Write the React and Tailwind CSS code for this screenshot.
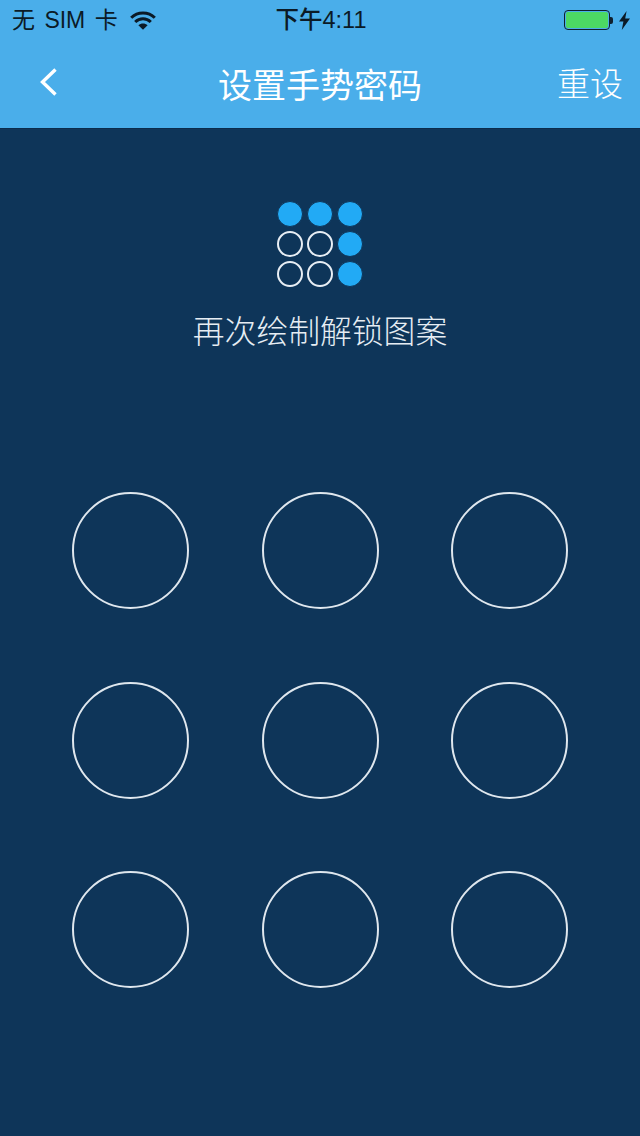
const sans = "font-['Liberation_Sans','Noto_Sans_CJK_SC',sans-serif]";

// 手势密码 preview: which of the 9 points are already drawn
const preview = [true, true, true, false, false, true, false, false, true];

function Wifi() {
  return (
    <svg width="26" height="19" viewBox="0 0 26 19" fill="none" stroke="#0b1a26" strokeWidth="3">
      <path d="M1.2 6.8C7.6 0.4 18.4 0.4 24.8 6.8" />
      <path d="M5.2 11C9.6 6.6 16.4 6.6 20.8 11" />
      <path d="M13 18.8L8.4 14.2C11 11.8 15 11.8 17.6 14.2Z" fill="#0b1a26" stroke="none" />
    </svg>
  );
}

function Battery() {
  return (
    <div className="flex items-center">
      <div className="w-[46px] h-[20px] rounded-[4px] border-[1.5px] border-[#10202e] p-[1px]">
        <div className="w-full h-full rounded-[2px] bg-[#4cd964]" />
      </div>
      <div className="w-[3px] h-[7px] rounded-r-[2px] bg-[#10202e]" />
    </div>
  );
}

function Bolt() {
  return (
    <svg width="11" height="19" viewBox="0 0 11 19" fill="#0b1a26">
      <path d="M7.6 0L0 10.6H4.4L2.8 19L11 7.4H6.2Z" />
    </svg>
  );
}

export default function App() {
  return (
    <div className={`w-[640px] h-[1136px] flex flex-col bg-[#0e3559] ${sans}`}>
      <header className="h-[129px] bg-[#4aaeea] border-b border-[#0b2c4c]">
        <div className="h-[40px] grid grid-cols-[1fr_auto_1fr] items-center text-[#0b1a26]">
          <div className="flex items-center pl-[12px]">
            <span className="text-[23px] leading-[40px] whitespace-pre [word-spacing:3px]">无 SIM 卡</span>
            <span className="ml-[12px]"><Wifi /></span>
          </div>
          <span className="text-[23.5px] leading-[40px] font-medium pl-[2px]">下午4:11</span>
          <div className="flex items-center justify-end gap-[6px] pr-[10px]">
            <Battery />
            <Bolt />
          </div>
        </div>
        <div className="h-[88px] grid grid-cols-[1fr_auto_1fr] items-center text-white">
          <div className="pl-[38px] pb-[5px]">
            <svg width="22" height="30" viewBox="0 0 22 30" fill="none" stroke="white" strokeWidth="3.4">
              <path d="M17.5 2.5L4.5 15L17.5 27.5" />
            </svg>
          </div>
          <h1 className="text-[34px] leading-none font-normal pt-[3px]">设置手势密码</h1>
          <div className="text-right pr-[17px] pt-[3px]">
            <button className="text-[33px] leading-none font-light">重设</button>
          </div>
        </div>
      </header>

      <main className="flex-1 flex flex-col items-center">
        <div className="mt-[72px] grid grid-cols-3 gap-[4px]">
          {preview.map((on, i) => (
            <div
              key={i}
              className={`w-[26px] h-[26px] rounded-full ${on ? "bg-[#22aaf5] border-[1px] border-[#0e3559]" : "border-2 border-[#e8eef4]"}`}
            />
          ))}
        </div>
        <p className="mt-[25px] text-[31.8px] leading-[40px] font-light text-[#e6edf3]">再次绘制解锁图案</p>

        <div className="mt-[140px] grid grid-cols-3 gap-x-[72.5px] gap-y-[72.5px]">
          {Array.from({ length: 9 }).map((_, i) => (
            <div key={i} className="w-[117px] h-[117px] rounded-full border-2 border-[#dfe7ee]" />
          ))}
        </div>
      </main>
    </div>
  );
}
